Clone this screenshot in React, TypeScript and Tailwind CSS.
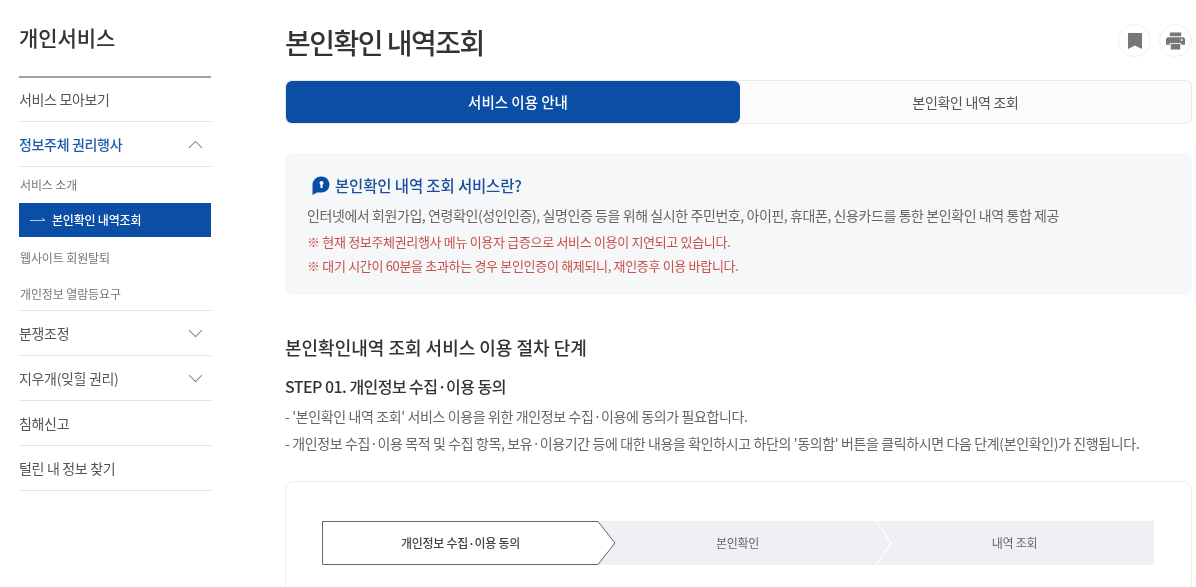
import { ChevronDown, ChevronUp } from "lucide-react";

const font = "font-['Noto_Sans_CJK_KR','Noto_Sans',sans-serif]";

function MenuRow({ label, open, closed, active, first }: { label: string; open?: boolean; closed?: boolean; active?: boolean; first?: boolean }) {
  return (
    <div className={`flex ${first ? "h-[44px]" : "h-[45px]"} items-center justify-between border-b border-[#e3e3e3] pr-[3px]`}>
      <span className={`text-[14px] tracking-[-0.33px] ${active ? "font-medium text-[#1e5aa8]" : "text-[#555]"}`}>{label}</span>
      {open && <ChevronUp size={25} strokeWidth={1} className="text-[#888]" />}
      {closed && <ChevronDown size={25} strokeWidth={1} className="text-[#888]" />}
    </div>
  );
}

function Sidebar() {
  const sub = "flex items-center pl-[1px] text-[12px] tracking-[-0.12px] text-[#777]";
  return (
    <aside className="w-[192px] shrink-0">
      <h2 className="flex h-[76px] items-center pb-[2px] text-[21px] leading-none font-medium tracking-[-0.1px] text-[#333]">개인서비스</h2>
      <div className="border-t-2 border-[#a0a0a0]">
        <MenuRow label="서비스 모아보기" first />
        <MenuRow label="정보주체 권리행사" open active />
        <div className={`h-[36px] ${sub}`}>서비스 소개</div>
        <div className="flex h-[34px] items-center gap-[5px] bg-[#0a4ea6] pl-[11px] text-[12px] font-medium tracking-[-0.2px] text-white">
          <svg width="17" height="6" viewBox="0 0 17 6" fill="none" stroke="#b9cde9" strokeWidth="1">
            <path d="M0 3.5h15l-3-2.5" />
          </svg>
          본인확인 내역조회
        </div>
        <div className={`h-[41px] ${sub}`}>웹사이트 회원탈퇴</div>
        <div className={`h-[33px] border-b border-[#e3e3e3] ${sub}`}>개인정보 열람등요구</div>
        <MenuRow label="분쟁조정" closed />
        <MenuRow label="지우개(잊힐 권리)" closed />
        <MenuRow label="침해신고" />
        <MenuRow label="털린 내 정보 찾기" />
      </div>
    </aside>
  );
}

function Stepper() {
  return (
    <div className="relative ml-[36px] mr-[37px] flex h-[44px] bg-[#eff0f4] text-[12px] tracking-[-0.3px]">
      <svg className="absolute left-0 top-0" width="296" height="44" viewBox="0 0 296 44" fill="none">
        <path d="M0.5 0.5H276L293 22L276 43.5H0.5Z" fill="#fff" stroke="#666" />
      </svg>
      <svg className="absolute left-[553px] top-0" width="18" height="44" viewBox="0 0 18 44" fill="none">
        <path d="M1 0L16 22L1 44" stroke="#fff" strokeWidth="1.2" />
      </svg>
      <div className="relative flex w-[277px] items-center justify-center font-medium text-[#444]">개인정보 수집·이용 동의</div>
      <div className="relative flex w-[277px] items-center justify-center text-[#666]">본인확인</div>
      <div className="relative flex w-[277px] items-center justify-center text-[#666]">내역 조회</div>
    </div>
  );
}

export default function App() {
  return (
    <div className={`flex h-[587px] w-[1196px] gap-[74px] overflow-hidden bg-white pl-[19px] pr-[4px] blur-[0.4px] ${font}`}>
      <Sidebar />
      <main className="min-w-0 flex-1">
        <div className="flex h-[80px] items-start justify-between">
          <h1 className="mt-[22px] text-[28px] leading-[40px] font-medium tracking-[-1.5px] text-[#333]">본인확인 내역조회</h1>
          <div className="mt-[24px] flex gap-[8px]">
            <button className="flex h-[33px] w-[33px] items-center justify-center rounded-full border border-[#eee] bg-white">
              <svg width="14" height="16" viewBox="0 0 14 16" fill="#777"><path d="M0 0h14v16l-7-3.5L0 16z" /></svg>
            </button>
            <button className="flex h-[33px] w-[33px] items-center justify-center rounded-full border border-[#eee] bg-white">
              <svg width="19" height="18" viewBox="0 0 20 18" fill="#777">
                <path d="M4 0h12v4H4z" />
                <path d="M2.500 5h15a2.500 2.500 0 0 1 2.500 2.500v5.500h-4v-2H4v2H0V7.500a2.500 2.500 0 0 1 2.500-2.500z" />
                <path d="M5 12h10v6H5z" />
                <circle cx="16.500" cy="8" r="1.100" fill="#fff" />
              </svg>
            </button>
          </div>
        </div>

        <div className="flex h-[44px] rounded-[6px] border border-[#e8e8e8] bg-[#fbfbfb] tracking-[-0.3px]">
          <div className="flex w-[454px] items-center justify-center rounded-[6px] bg-[#0a4ea6] pl-[10px] text-[14.5px] font-medium tracking-[0px] text-white">서비스 이용 안내</div>
          <div className="flex flex-1 items-center justify-center text-[14px] text-[#555]">본인확인 내역 조회</div>
        </div>

        <section className="mt-[29px] h-[142px] rounded-[8px] bg-[#f6f7f9] pl-[22px] pt-[21px]">
          <div className="ml-[5px] flex items-center gap-[5px] text-[15.5px] leading-[22px] font-medium tracking-[-0.15px] text-[#1c4f9c]">
            <svg width="18" height="19" viewBox="0 0 18 19">
              <path d="M9.500 0.500a8 8 0 0 1 0 16H5L0.500 19V9a8.500 8.500 0 0 1 9-8.500z" fill="#0a4ea6" />
              <circle cx="9.500" cy="7" r="2" fill="#fff" />
              <rect x="8.500" y="8" width="2" height="4" fill="#fff" />
            </svg>
            본인확인 내역 조회 서비스란?
          </div>
          <p className="mt-[9px] text-[14px] leading-[20px] tracking-[-0.42px] text-[#666]">
            인터넷에서 회원가입, 연령확인(성인인증), 실명인증 등을 위해 실시한 주민번호, 아이핀, 휴대폰, 신용카드를 통한 본인확인 내역 통합 제공
          </p>
          <p className="mt-[8px] text-[13px] leading-[18px] tracking-[-0.32px] text-[#c8504a]">※ 현재 정보주체권리행사 메뉴 이용자 급증으로 서비스 이용이 지연되고 있습니다.</p>
          <p className="mt-[6px] text-[13px] leading-[18px] tracking-[-0.32px] text-[#c8504a]">※ 대기 시간이 60분을 초과하는 경우 본인인증이 해제되니, 재인증후 이용 바랍니다.</p>
        </section>

        <h3 className="mt-[39px] text-[18px] leading-[26px] font-medium text-[#333]">본인확인내역 조회 서비스 이용 절차 단계</h3>
        <h4 className="mt-[16px] text-[16px] leading-[20px] font-medium tracking-[-0.55px] text-[#333]">STEP 01. 개인정보 수집·이용 동의</h4>
        <p className="mt-[10px] text-[14px] leading-[20px] tracking-[-0.38px] text-[#666]">- '본인확인 내역 조회' 서비스 이용을 위한 개인정보 수집·이용에 동의가 필요합니다.</p>
        <p className="mt-[7px] text-[14px] leading-[20px] tracking-[-0.38px] text-[#666]">- 개인정보 수집·이용 목적 및 수집 항목, 보유·이용기간 등에 대한 내용을 확인하시고 하단의 '동의함' 버튼을 클릭하시면 다음 단계(본인확인)가 진행됩니다.</p>

        <section className="mt-[28px] h-[140px] rounded-[8px] border border-[#ececec] pt-[39px]">
          <Stepper />
        </section>
      </main>
    </div>
  );
}
